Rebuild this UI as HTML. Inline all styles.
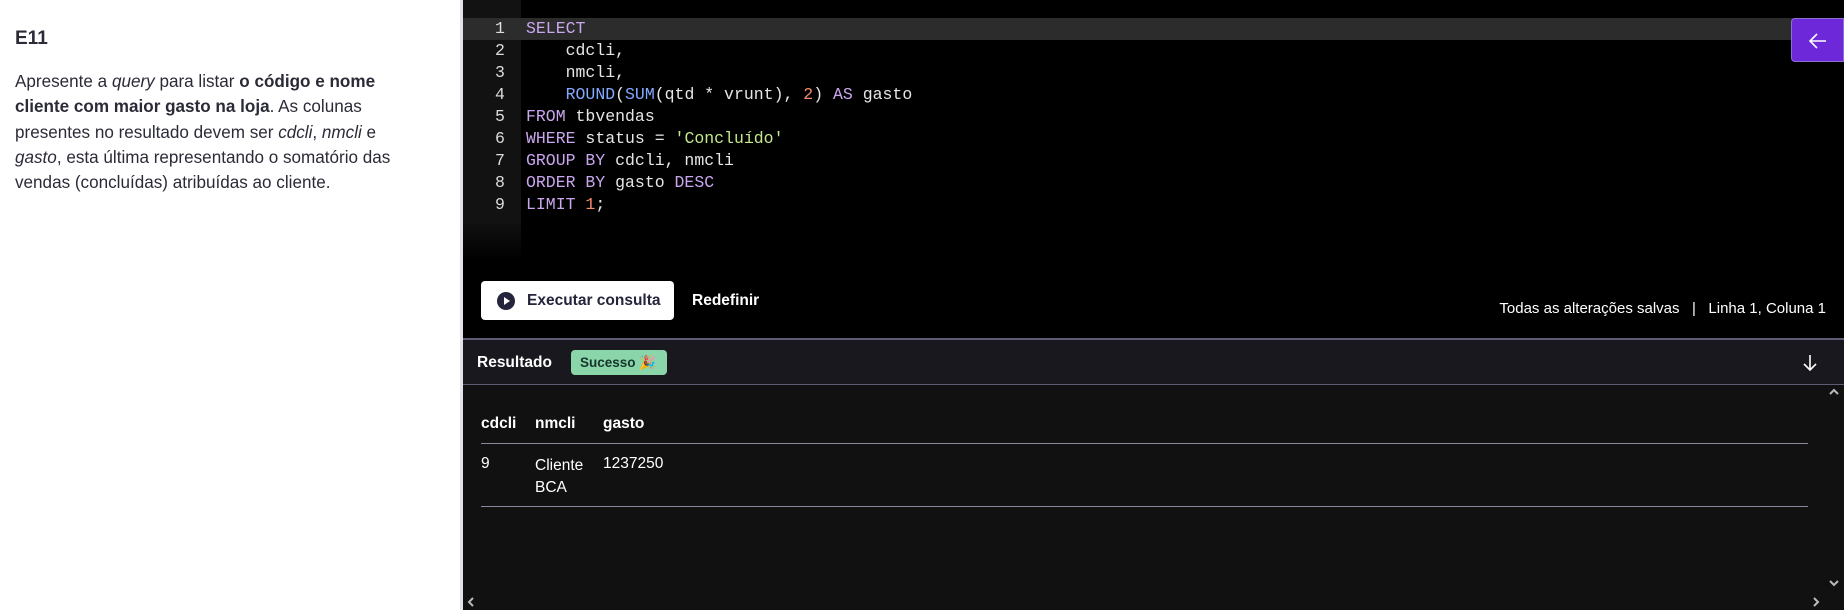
<!DOCTYPE html>
<html><head><meta charset="utf-8"><style>
*{margin:0;padding:0;box-sizing:border-box}
body{width:1844px;height:610px;overflow:hidden;background:#fff;font-family:"Liberation Sans",sans-serif;position:relative}
.left{position:absolute;left:0;top:0;width:460px;height:610px;background:#fff;color:#2b2b38}
.left h2{position:absolute;left:15px;top:28px;font-size:19px;font-weight:bold}
.left p{position:absolute;left:15px;top:69px;font-size:17.1px;line-height:25.3px;white-space:nowrap}
.sep{position:absolute;left:460px;top:0;width:3px;height:610px;background:#e2e2ea}
.ed{position:absolute;left:463px;top:0;width:1381px;height:338px;background:#000}
.gut{position:absolute;left:463px;top:0;width:58px;height:260px;background:linear-gradient(#121212 85%,#000)}
.hl{position:absolute;left:463px;top:18px;width:1381px;height:22px;background:#2c2c2c}
.code{position:absolute;left:463px;top:18px;font-family:"Liberation Mono",monospace;font-size:16.5px;line-height:22px;color:#e6e6e6;white-space:pre}
.ln{position:absolute;left:463px;width:58px;text-align:center;padding-left:16px;color:#ddd;font-family:"Liberation Mono",monospace;font-size:16.5px;line-height:22px;top:18px}
.k{color:#c9a6ee}.f{color:#82aaff}.n{color:#f78c6c}.s{color:#c3e88d}
.purple{position:absolute;left:1791px;top:18px;width:53px;height:44px;background:#6d28d9;border-radius:4px 0 0 4px;border:1px solid #8b6fd6}
.btn{position:absolute;left:481px;top:281px;width:193px;height:39px;background:#fff;border-radius:4px}
.btn .pl{position:absolute;left:16px;top:11px;width:18px;height:18px;border-radius:50%;background:#24243a}
.btn .pl:after{content:"";position:absolute;left:7px;top:5px;border-left:6px solid #fff;border-top:4px solid transparent;border-bottom:4px solid transparent}
.btn span{position:absolute;left:46px;top:11px;font-size:15.5px;font-weight:bold;color:#24243a}
.red{position:absolute;left:692px;top:292px;font-size:15.5px;font-weight:bold;color:#fff}
.stat{position:absolute;right:18px;top:300px;font-size:15px;color:#fff;white-space:pre}
.line1{position:absolute;left:463px;top:338px;width:1381px;height:2px;background:#5e5c74}
.rh{position:absolute;left:463px;top:340px;width:1381px;height:44px;background:#18181e}
.line2{position:absolute;left:463px;top:384px;width:1381px;height:1px;background:#5e5c74}
.rb{position:absolute;left:463px;top:385px;width:1381px;height:225px;background:#111112}
.t{position:absolute;color:#fff;font-size:15.5px}
.b{font-weight:bold}
.badge{position:absolute;left:571px;top:350px;width:96px;height:25px;background:#8bd5ab;border-radius:4px;font-size:13.5px;font-weight:bold;color:#17352a;padding:5px 0 0 9px}
.tl{position:absolute;left:481px;width:1327px;height:1px;background:#8a889c}
</style></head><body>
<div class="left"><h2>E11</h2>
<p>Apresente a <i>query</i> para listar <b>o código e nome</b><br><b>cliente com maior gasto na loja</b>. As colunas<br>presentes no resultado devem ser <i>cdcli</i>, <i>nmcli</i> e<br><i>gasto</i>, esta última representando o somatório das<br>vendas (concluídas) atribuídas ao cliente.</p></div>
<div class="sep"></div>
<div class="ed"></div><div class="gut"></div><div class="hl"></div>
<div class="ln">1<br>2<br>3<br>4<br>5<br>6<br>7<br>8<br>9</div>
<div class="code" style="left:526px"><span class="k">SELECT</span>
    cdcli,
    nmcli,
    <span class="f">ROUND</span>(<span class="f">SUM</span>(qtd * vrunt), <span class="n">2</span>) <span class="k">AS</span> gasto
<span class="k">FROM</span> tbvendas
<span class="k">WHERE</span> status = <span class="s">'Concluído'</span>
<span class="k">GROUP BY</span> cdcli, nmcli
<span class="k">ORDER BY</span> gasto <span class="k">DESC</span>
<span class="k">LIMIT</span> <span class="n">1</span>;</div>
<div class="purple"><svg width="53" height="44" viewBox="0 0 53 44"><path d="M34 22H19M25 15l-7 7 7 7" stroke="#fff" stroke-width="1.6" fill="none"/></svg></div>
<div class="btn"><div class="pl"></div><span>Executar consulta</span></div>
<div class="red">Redefinir</div>
<div class="stat">Todas as alterações salvas   |   Linha 1, Coluna 1</div>
<div class="line1"></div><div class="rh"></div><div class="line2"></div><div class="rb"></div>
<div class="t b" style="left:477px;top:354px">Resultado</div>
<div class="badge">Sucesso 🎉</div>
<svg style="position:absolute;left:1801px;top:353px" width="18" height="20" viewBox="0 0 18 20"><path d="M9 2v15M3 11l6 6 6-6" stroke="#fff" stroke-width="1.6" fill="none"/></svg>
<div class="t b" style="left:481px;top:415px">cdcli</div>
<div class="t b" style="left:535px;top:415px">nmcli</div>
<div class="t b" style="left:603px;top:415px">gasto</div>
<div class="tl" style="top:443px"></div>
<div class="t" style="left:481px;top:455px">9</div>
<div class="t" style="left:535px;top:455px;line-height:22px">Cliente<br>BCA</div>
<div class="t" style="left:603px;top:455px">1237250</div>
<div class="tl" style="top:506px"></div>
<svg style="position:absolute;left:1829px;top:388px" width="10" height="8"><path d="M1 6l4-4 4 4" stroke="#bbb" stroke-width="2" fill="none"/></svg>
<svg style="position:absolute;left:1829px;top:579px" width="10" height="8"><path d="M1 2l4 4 4-4" stroke="#bbb" stroke-width="2" fill="none"/></svg>
<svg style="position:absolute;left:1812px;top:597px" width="8" height="10"><path d="M2 1l4 4-4 4" stroke="#bbb" stroke-width="2" fill="none"/></svg>
<svg style="position:absolute;left:467px;top:597px" width="8" height="10"><path d="M6 1l-4 4 4 4" stroke="#bbb" stroke-width="2" fill="none"/></svg>
</body></html>
